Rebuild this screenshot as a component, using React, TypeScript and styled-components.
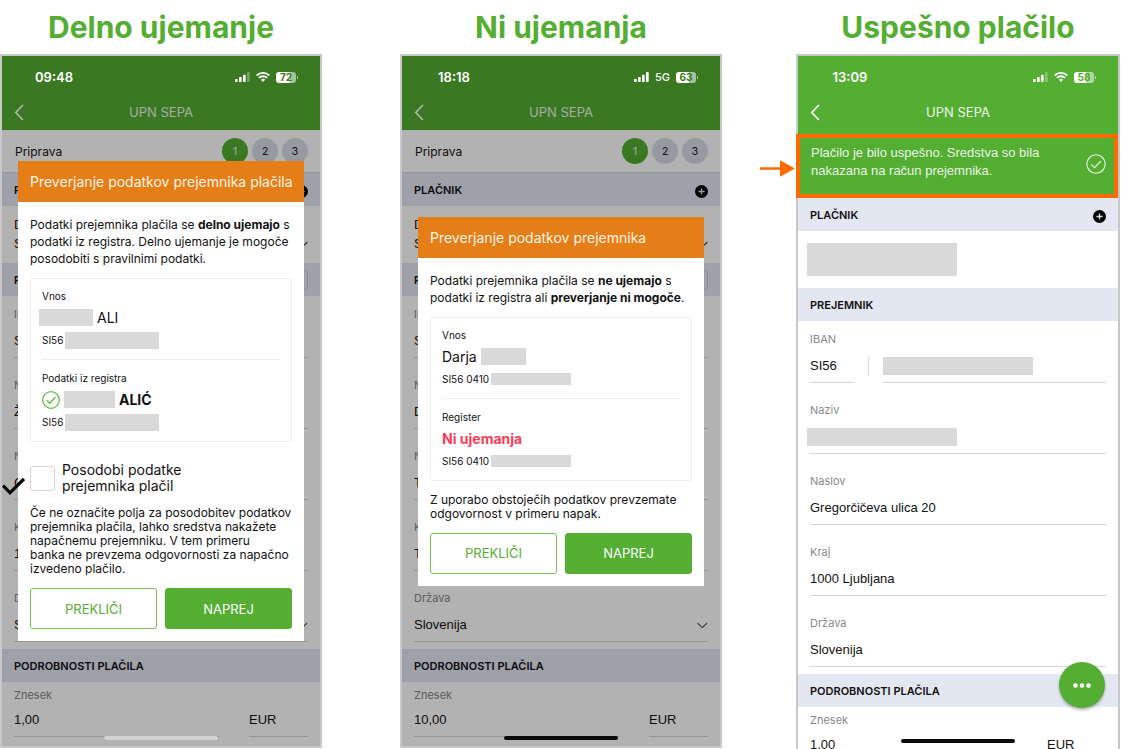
import React, { useId } from 'react';
import styled, { createGlobalStyle, css } from 'styled-components';

const green = '#53ae31';
const orange = '#ff6a00';
const mask = '#d9d9d9';

const GlobalStyle = createGlobalStyle`
  *, *::before, *::after { box-sizing: border-box; }
  body { margin: 0; background: #fff; font-family: Inter, "Liberation Sans", sans-serif; color: #111; }
  h1, h2, h3, p { margin: 0; }
  input, select, button { font-family: inherit; }
`;

const Page = styled.main`
  display: grid;
  grid-template-columns: minmax(0, 322fr) minmax(0, 322fr) minmax(0, 324fr);
  height: 100vh;
  padding-right: 1px;
  column-gap: 76px;
  overflow: hidden;
  @media (min-width: 900px) {
    grid-template-columns: minmax(0, 322fr) 78px minmax(0, 322fr) 74px minmax(0, 324fr);
    column-gap: 0;
    & > :nth-child(2) { grid-column: 3; }
    & > :nth-child(3) { grid-column: 5; }
  }
`;

const Column = styled.section<{ $bleed?: boolean }>`
  display: flex;
  flex-direction: column;
  min-width: 0;
  min-height: 0;
  padding-bottom: ${p => (p.$bleed ? 0 : 1)}px;
`;

const Heading = styled.h1`
  flex: none;
  font-size: 30px;
  line-height: 54px;
  font-weight: 700;
  color: ${green};
  text-align: center;
  white-space: nowrap;
`;

const Phone = styled.div<{ $bleed?: boolean }>`
  position: relative;
  isolation: isolate;
  flex: 1;
  min-height: 0;
  border: 2px solid #c8c8c8;
  ${p => p.$bleed && css`border-bottom: 0;`}
`;

const AppHeader = styled.header<{ $tall?: boolean }>`
  background: ${green};
  padding-bottom: ${p => (p.$tall ? 6 : 2)}px;
`;

const StatusBar = styled.div`
  position: relative;
  z-index: 2;
  display: flex;
  align-items: center;
  justify-content: space-between;
  height: 40px;
  padding: 2px 22px 0 32px;
  color: #fff;
`;

const Clock = styled.span`
  width: 40px;
  font-size: 13px;
  line-height: 16px;
  font-weight: 600;
  text-align: center;
`;

const StatusIcons = styled.div`
  display: flex;
  align-items: center;
  gap: 6px;
`;

const Network = styled.span`
  font-size: 11px;
  line-height: 12px;
  font-weight: 500;
`;

const BatteryBody = styled.span<{ $level: number; $ink: string }>`
  position: relative;
  width: 20px;
  height: 11px;
  margin-right: 2px;
  border-radius: 3px;
  background: linear-gradient(to right, #fff ${p => p.$level}%, rgba(255, 255, 255, 0.55) ${p => p.$level}%);
  color: ${p => p.$ink};
  font-size: 10px;
  line-height: 11px;
  font-weight: 700;
  text-align: center;
  &::after {
    content: '';
    position: absolute;
    left: 21px;
    top: 4px;
    width: 1px;
    height: 3px;
    background: rgba(255, 255, 255, 0.55);
  }
`;

const NavBar = styled.nav`
  display: grid;
  grid-template-columns: 36px 1fr 36px;
  align-items: center;
  height: 32px;
`;

const BackButton = styled.button`
  display: flex;
  align-items: center;
  height: 32px;
  padding: 0 0 0 12px;
  border: 0;
  background: none;
  color: #fff;
`;

const NavTitle = styled.h2`
  font-size: 13px;
  line-height: 16px;
  font-weight: 400;
  color: #edf6ea;
  text-align: center;
`;

const Steps = styled.div`
  display: flex;
  align-items: center;
  gap: 4px;
  height: 43px;
  padding: 0 12px 0 13px;
  border-bottom: 1px solid #d4d6dc;
  font-size: 12px;
`;

const StepsLabel = styled.span`
  flex: 1;
`;

const Step = styled.span<{ $active?: boolean }>`
  width: 26px;
  height: 26px;
  border-radius: 50%;
  background: ${p => (p.$active ? green : '#d9dce6')};
  color: ${p => (p.$active ? '#e8f4e4' : '#222')};
  font-size: 11px;
  line-height: 26px;
  text-align: center;
`;

const SectionBar = styled.div`
  display: flex;
  align-items: center;
  justify-content: space-between;
  height: 33px;
  padding: 0 12px;
  background: #e3e7f1;
`;

const SectionTitle = styled.h3`
  font-size: 11px;
  line-height: 16px;
  font-weight: 600;
`;

const IconButton = styled.button`
  display: flex;
  padding: 4px 0 0;
  border: 0;
  background: none;
`;

const OutlineButton = styled.button`
  width: 24px;
  height: 20px;
  padding: 0;
  border: 1px solid #c6cad5;
  border-radius: 3px;
  background: none;
`;

const Account = styled.div`
  display: flex;
  align-items: flex-end;
  justify-content: space-between;
  height: 57px;
  padding: 8px 12px 10px;
  font: 13px/19px "Liberation Sans", sans-serif;
  & > svg { margin-bottom: 5px; }
`;

const AccountMasked = styled.div`
  height: 57px;
  padding: 12px 9px;
`;

const Masked = styled.span<{ $w: number; $h?: number; $shift?: boolean }>`
  display: block;
  flex: none;
  width: ${p => p.$w}px;
  height: ${p => p.$h ?? 18}px;
  margin-left: ${p => (p.$shift ? -3 : 0)}px;
  background: ${mask};
`;

const Fields = styled.div`
  padding: 0 12px 7px;
`;

const FieldBox = styled.div`
  padding-top: 20px;
  &:first-child { padding-top: 11px; }
`;

const FieldLabel = styled.label`
  display: block;
  font-size: 11px;
  line-height: 14px;
  color: #898989;
`;

const ValueRow = styled.div`
  display: flex;
  margin-top: 10px;
`;

const ValueCell = styled.div<{ $w?: number }>`
  display: flex;
  align-items: center;
  flex: ${p => (p.$w ? `0 0 ${p.$w}px` : '1 1 0')};
  min-width: 0;
  height: 27px;
  padding-bottom: 6px;
  border-bottom: 1px solid #d6d6d6;
`;

const control = css`
  width: 100%;
  min-width: 0;
  height: 20px;
  padding: 0;
  border: 0;
  outline: 0;
  background: none;
  color: #111;
  font: 13px/20px "Liberation Sans", sans-serif;
`;

const TextInput = styled.input`${control}`;
const Select = styled.select`${control} appearance: none;`;

const Divider = styled.span`
  width: 1px;
  height: 20px;
  margin: 0 14px;
  background: #dcdcdc;
`;

const AmountBox = styled.div`
  display: flex;
  gap: 30px;
  padding: 6px 12px 0;
`;

const AmountCell = styled.div<{ $w?: number }>`
  display: flex;
  flex-direction: column;
  justify-content: flex-end;
  gap: 8px;
  flex: ${p => (p.$w ? `0 0 ${p.$w}px` : '1 1 0')};
  min-width: 0;
  & > div { flex: none; }
`;

const HomeIndicator = styled.span<{ $light?: boolean }>`
  position: absolute;
  z-index: 3;
  left: 50%;
  bottom: 6px;
  width: 114px;
  height: 4px;
  margin-left: -57px;
  border-radius: 2px;
  background: ${p => (p.$light ? '#d2d2d2' : '#0b0b0b')};
`;

const Overlay = styled.div`
  position: absolute;
  inset: 0;
  z-index: 1;
  display: flex;
  align-items: center;
  padding: 0 16px;
  background: rgba(0, 0, 0, 0.3);
`;

const Dialog = styled.div`
  flex: 1;
  min-width: 0;
  background: #fff;
`;

const DialogTitle = styled.h2`
  padding: 0 12px;
  background: #e57e17;
  color: #fff4e6;
  font-size: 14px;
  line-height: 41px;
  font-weight: 400;
  white-space: nowrap;
`;

const DialogBody = styled.div`
  padding: 14px 12px 12px;
`;

const Intro = styled.p`
  font-size: 12px;
  line-height: 17px;
  white-space: nowrap;
`;

const Card = styled.div`
  margin-top: 11px;
  padding: 0 11px;
  border: 1px solid #eee;
  border-radius: 3px;
`;

const Entry = styled.div`
  display: flex;
  flex-direction: column;
  gap: 6px;
  padding: 10px 0;
  & + & {
    padding-top: 11px;
    border-top: 1px solid #eee;
  }
`;

const EntryLabel = styled.span`
  font-size: 10px;
  line-height: 14px;
`;

const EntryRow = styled.div<{ $small?: boolean }>`
  display: flex;
  align-items: center;
  gap: ${p => (p.$small ? 2 : 4)}px;
  height: 17px;
  font-size: ${p => (p.$small ? 10 : 14)}px;
  line-height: 17px;
`;

const NoMatch = styled.strong`
  color: #fb3b58;
`;

const CheckRow = styled.div`
  position: relative;
  display: flex;
  align-items: center;
  gap: 7px;
  margin-top: 20px;
`;

const CheckBox = styled.input`
  appearance: none;
  flex: none;
  width: 25px;
  height: 25px;
  margin: 0;
  border: 1px solid #d6d6d6;
  border-radius: 3px;
  background: #fff;
`;

const CheckLabel = styled.label`
  font-size: 14px;
  line-height: 16px;
`;

const CheckPointer = styled.svg`
  position: absolute;
  left: -28px;
  top: 15px;
`;

const Note = styled.p`
  margin-top: 12px;
  font-size: 12px;
  line-height: 14px;
  white-space: nowrap;
`;

const Actions = styled.div`
  display: grid;
  grid-template-columns: 1fr 1fr;
  gap: 8px;
  margin-top: 12px;
`;

const Action = styled.button<{ $primary?: boolean }>`
  height: 41px;
  padding: 0;
  border: 1px solid ${p => (p.$primary ? green : '#72c552')};
  border-radius: 3px;
  background: ${p => (p.$primary ? green : '#fff')};
  color: ${p => (p.$primary ? '#fff' : green)};
  font-size: 13px;
  line-height: 16px;
`;

const Banner = styled.div`
  position: relative;
  display: flex;
  align-items: center;
  justify-content: space-between;
  height: 64px;
  margin-left: -2px;
  padding: 0 8px 4px 11px;
  border: 4px solid ${orange};
  background: ${green};
  color: #eaf5e6;
  font: 13px/18px "Liberation Sans", sans-serif;
  & > span { margin-bottom: 4px; }
  & > svg { flex: none; }
`;

const BannerArrow = styled.svg`
  position: absolute;
  left: -40px;
  top: 22px;
`;

const MoreButton = styled.button`
  position: absolute;
  right: 13px;
  bottom: 41px;
  z-index: 2;
  display: flex;
  align-items: center;
  justify-content: center;
  width: 46px;
  height: 46px;
  padding: 0;
  border: 0;
  border-radius: 50%;
  background: ${green};
  box-shadow: 0 2px 3px rgba(0, 0, 0, 0.3);
`;

const Back = () => (
  <svg width="10" height="17" viewBox="0 0 10 17" fill="none" stroke="currentColor" strokeWidth="1.7">
    <path d="M9 1 1.8 8.5 9 16" />
  </svg>
);

const Signal = ({ bars }: { bars: number }) => (
  <svg width="15" height="10" viewBox="0 0 15 10">
    {[3, 5, 7.3, 10].map((h, i) => (
      <rect key={h} x={i * 4} y={10 - h} width="2.7" height={h} rx="0.7" fill="#fff" opacity={i < bars ? 1 : 0.3} />
    ))}
  </svg>
);

const Wifi = () => (
  <svg width="14" height="10" viewBox="0 0 14 10" fill="none" stroke="#fff" strokeWidth="1.8">
    <path d="M.7 3.5a9 9 0 0 1 12.6 0M2.9 5.9a5.9 5.9 0 0 1 8.2 0" />
    <path d="M7 9.9 4.9 7.8a3 3 0 0 1 4.2 0z" fill="#fff" stroke="none" />
  </svg>
);

const Plus = () => (
  <svg width="13" height="13" viewBox="0 0 13 13">
    <circle cx="6.5" cy="6.5" r="6.5" fill="#000" />
    <path d="M6.5 3.4v6.2M3.4 6.5h6.2" stroke="#dfe3ec" strokeWidth="1.3" />
  </svg>
);

const Chevron = () => (
  <svg width="11" height="7" viewBox="0 0 11 7" fill="none" stroke="#444" strokeWidth="1.1">
    <path d="m.6 1 4.9 4.7L10.4 1" />
  </svg>
);

const CircleCheck = ({ size, color, weight }: { size: number; color: string; weight: number }) => (
  <svg width={size} height={size} viewBox="0 0 20 20" fill="none" stroke={color} strokeWidth={weight}>
    <circle cx="10" cy="10" r="9.2" />
    <path d="m5.2 10.4 3.3 3.2 6.4-6.6" />
  </svg>
);

type HeaderProps = { time: string; bars: number; network?: string; level: number; dimmed?: boolean };

function Header({ time, bars, network, level, dimmed }: HeaderProps) {
  return (
    <AppHeader $tall={!dimmed}>
      <StatusBar>
        <Clock>{time}</Clock>
        <StatusIcons>
          <Signal bars={bars} />
          {network ? <Network>{network}</Network> : <Wifi />}
          <BatteryBody $level={level} $ink={dimmed ? '#3a7a22' : green}>{level}</BatteryBody>
        </StatusIcons>
      </StatusBar>
      <NavBar>
        <BackButton aria-label="Nazaj"><Back /></BackButton>
        <NavTitle>UPN SEPA</NavTitle>
      </NavBar>
    </AppHeader>
  );
}

function Preparation() {
  return (
    <Steps>
      <StepsLabel>Priprava</StepsLabel>
      <Step $active>1</Step>
      <Step>2</Step>
      <Step>3</Step>
    </Steps>
  );
}

function Section({ title, children }: { title: string; children?: React.ReactNode }) {
  return (
    <SectionBar>
      <SectionTitle>{title}</SectionTitle>
      {children}
    </SectionBar>
  );
}

const PayerSection = () => (
  <Section title="PLAČNIK">
    <IconButton aria-label="Dodaj plačnika"><Plus /></IconButton>
  </Section>
);

function Field({ label, value }: { label: string; value?: string }) {
  const id = useId();
  return (
    <FieldBox>
      <FieldLabel htmlFor={id}>{label}</FieldLabel>
      <ValueRow>
        <ValueCell>
          {value === undefined ? <Masked id={id} $w={150} $shift /> : <TextInput id={id} defaultValue={value} />}
        </ValueCell>
      </ValueRow>
    </FieldBox>
  );
}

function IbanField({ masked }: { masked?: boolean }) {
  const id = useId();
  return (
    <FieldBox>
      <FieldLabel htmlFor={id}>IBAN</FieldLabel>
      <ValueRow>
        <ValueCell $w={44}><TextInput id={id} defaultValue="SI56" /></ValueCell>
        <Divider />
        <ValueCell>{masked && <Masked $w={150} />}</ValueCell>
      </ValueRow>
    </FieldBox>
  );
}

function CountryField({ chevron }: { chevron?: boolean }) {
  const id = useId();
  return (
    <FieldBox>
      <FieldLabel htmlFor={id}>Država</FieldLabel>
      <ValueRow>
        <ValueCell>
          <Select id={id}><option>Slovenija</option></Select>
          {chevron && <Chevron />}
        </ValueCell>
      </ValueRow>
    </FieldBox>
  );
}

function Amount({ value }: { value: string }) {
  const id = useId();
  return (
    <AmountBox>
      <AmountCell>
        <FieldLabel htmlFor={id}>Znesek</FieldLabel>
        <ValueCell><TextInput id={id} defaultValue={value} /></ValueCell>
      </AmountCell>
      <AmountCell $w={59}>
        <ValueCell><TextInput aria-label="Valuta" defaultValue="EUR" /></ValueCell>
      </AmountCell>
    </AmountBox>
  );
}

type FormProps = { account: [string, string]; name: string; street: string; town: string; amount: string };

function PaymentForm({ account, name, street, town, amount }: FormProps) {
  return (
    <>
      <Preparation />
      <PayerSection />
      <Account>
        <span>{account[0]}<br />{account[1]}</span>
        <Chevron />
      </Account>
      <Section title="PREJEMNIK"><OutlineButton aria-label="Izberi prejemnika" /></Section>
      <Fields>
        <IbanField />
        <Field label="Naziv" value={name} />
        <Field label="Naslov" value={street} />
        <Field label="Kraj" value={town} />
        <CountryField chevron />
      </Fields>
      <Section title="PODROBNOSTI PLAČILA" />
      <Amount value={amount} />
    </>
  );
}

const DialogActions = () => (
  <Actions>
    <Action>PREKLIČI</Action>
    <Action $primary>NAPREJ</Action>
  </Actions>
);

function PartialMatch() {
  return (
    <Column>
      <Heading>Delno ujemanje</Heading>
      <Phone>
        <Header time="09:48" bars={3} level={72} dimmed />
        <PaymentForm account={['D', 'S']} name="Ž" street="C" town="1" amount="1,00" />
        <Overlay>
          <Dialog role="dialog">
            <DialogTitle>Preverjanje podatkov prejemnika plačila</DialogTitle>
            <DialogBody>
              <Intro>
                Podatki prejemnika plačila se <strong>delno ujemajo</strong> s<br />
                podatki iz registra. Delno ujemanje je mogoče<br />
                posodobiti s pravilnimi podatki.
              </Intro>
              <Card>
                <Entry>
                  <EntryLabel>Vnos</EntryLabel>
                  <EntryRow><Masked $w={54} $h={17} $shift />ALI</EntryRow>
                  <EntryRow $small>SI56<Masked $w={94} $h={17} /></EntryRow>
                </Entry>
                <Entry>
                  <EntryLabel>Podatki iz registra</EntryLabel>
                  <EntryRow>
                    <CircleCheck size={18} color="#5cba3c" weight={1.4} />
                    <Masked $w={51} $h={17} />
                    <strong>ALIĆ</strong>
                  </EntryRow>
                  <EntryRow $small>SI56<Masked $w={94} $h={17} /></EntryRow>
                </Entry>
              </Card>
              <CheckRow>
                <CheckBox type="checkbox" id="update-payee" />
                <CheckLabel htmlFor="update-payee">Posodobi podatke<br />prejemnika plačil</CheckLabel>
                <CheckPointer width="23" height="19" viewBox="0 0 23 19" fill="none" stroke="#000" strokeWidth="3.2">
                  <path d="m1 8.5 7 7.3L22 2" />
                </CheckPointer>
              </CheckRow>
              <Note>
                Če ne označite polja za posodobitev podatkov<br />
                prejemnika plačila, lahko sredstva nakažete<br />
                napačnemu prejemniku. V tem primeru<br />
                banka ne prevzema odgovornosti za napačno<br />
                izvedeno plačilo.
              </Note>
              <DialogActions />
            </DialogBody>
          </Dialog>
        </Overlay>
        <HomeIndicator $light />
      </Phone>
    </Column>
  );
}

function NoMatchColumn() {
  return (
    <Column>
      <Heading>Ni ujemanja</Heading>
      <Phone>
        <Header time="18:18" bars={4} network="5G" level={63} dimmed />
        <PaymentForm account={['D', 'S']} name="D" street="T" town="T" amount="10,00" />
        <Overlay>
          <Dialog role="dialog">
            <DialogTitle>Preverjanje podatkov prejemnika</DialogTitle>
            <DialogBody>
              <Intro>
                Podatki prejemnika plačila se <strong>ne ujemajo</strong> s<br />
                podatki iz registra ali <strong>preverjanje ni mogoče</strong>.
              </Intro>
              <Card>
                <Entry>
                  <EntryLabel>Vnos</EntryLabel>
                  <EntryRow>Darja<Masked $w={45} $h={17} /></EntryRow>
                  <EntryRow $small>SI56 0410<Masked $w={80} $h={12} /></EntryRow>
                </Entry>
                <Entry>
                  <EntryLabel>Register</EntryLabel>
                  <EntryRow><NoMatch>Ni ujemanja</NoMatch></EntryRow>
                  <EntryRow $small>SI56 0410<Masked $w={80} $h={12} /></EntryRow>
                </Entry>
              </Card>
              <Note>
                Z uporabo obstoječih podatkov prevzemate<br />
                odgovornost v primeru napak.
              </Note>
              <DialogActions />
            </DialogBody>
          </Dialog>
        </Overlay>
        <HomeIndicator />
      </Phone>
    </Column>
  );
}

function Success() {
  return (
    <Column $bleed>
      <Heading>Uspešno plačilo</Heading>
      <Phone $bleed>
        <Header time="13:09" bars={3} level={58} />
        <Banner role="status">
          <span>Plačilo je bilo uspešno. Sredstva so bila<br />nakazana na račun prejemnika.</span>
          <CircleCheck size={20} color="#eaf5e6" weight={1.1} />
          <BannerArrow width="35" height="17" viewBox="0 0 35 17" fill={orange}>
            <path d="M0 7.2h20V.3l15 8.2-15 8.2V9.8H0z" />
          </BannerArrow>
        </Banner>
        <PayerSection />
        <AccountMasked><Masked $w={150} $h={33} /></AccountMasked>
        <Section title="PREJEMNIK" />
        <Fields>
          <IbanField masked />
          <Field label="Naziv" />
          <Field label="Naslov" value="Gregorčičeva ulica 20" />
          <Field label="Kraj" value="1000 Ljubljana" />
          <CountryField />
        </Fields>
        <Section title="PODROBNOSTI PLAČILA" />
        <Amount value="1,00" />
        <MoreButton aria-label="Več">
          <svg width="18" height="5" viewBox="0 0 18 5" fill="#fff">
            <circle cx="2.5" cy="2.5" r="2.3" />
            <circle cx="9" cy="2.5" r="2.3" />
            <circle cx="15.5" cy="2.5" r="2.3" />
          </svg>
        </MoreButton>
        <HomeIndicator />
      </Phone>
    </Column>
  );
}

export default function App() {
  return (
    <>
      <GlobalStyle />
      <Page>
        <PartialMatch />
        <NoMatchColumn />
        <Success />
      </Page>
    </>
  );
}
